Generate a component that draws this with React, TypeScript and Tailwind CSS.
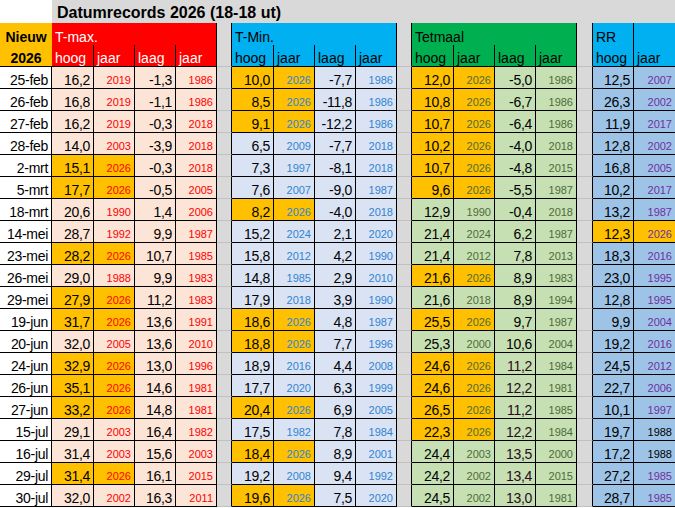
import React from 'react';

type Row = [string, string, string, string, string, string, string, string, string, string, string, string, string, string, string];

const rows: Row[] = [
  ['25-feb', '16,2', '2019', '-1,3', '1986', '10,0', '2026', '-7,7', '1986', '12,0', '2026', '-5,0', '1986', '12,5', '2007'],
  ['26-feb', '16,8', '2019', '-1,1', '1986', '8,5', '2026', '-11,8', '1986', '10,8', '2026', '-6,7', '1986', '26,3', '2002'],
  ['27-feb', '16,2', '2019', '-0,3', '2018', '9,1', '2026', '-12,2', '1986', '10,7', '2026', '-6,4', '1986', '11,9', '2017'],
  ['28-feb', '14,0', '2003', '-3,9', '2018', '6,5', '2009', '-7,7', '2018', '10,2', '2026', '-4,0', '2018', '12,8', '2002'],
  ['2-mrt', '15,1', '2026', '-0,3', '2018', '7,3', '1997', '-8,1', '2018', '10,7', '2026', '-4,8', '2015', '16,8', '2005'],
  ['5-mrt', '17,7', '2026', '-0,5', '2005', '7,6', '2007', '-9,0', '1987', '9,6', '2026', '-5,5', '1987', '10,2', '2017'],
  ['18-mrt', '20,6', '1990', '1,4', '2006', '8,2', '2026', '-4,0', '2018', '12,9', '1990', '-0,4', '2018', '13,2', '1987'],
  ['14-mei', '28,7', '1992', '9,9', '1987', '15,2', '2024', '2,1', '2020', '21,4', '2024', '6,2', '1987', '12,3', '2026'],
  ['23-mei', '28,2', '2026', '10,7', '1985', '15,8', '2012', '4,2', '1990', '21,4', '2012', '7,8', '2013', '18,3', '2016'],
  ['26-mei', '29,0', '1988', '9,9', '1983', '14,8', '1985', '2,9', '2010', '21,6', '2026', '8,9', '1983', '23,0', '1995'],
  ['29-mei', '27,9', '2026', '11,2', '1983', '17,9', '2018', '3,9', '1990', '21,6', '2018', '8,9', '1994', '12,8', '1995'],
  ['19-jun', '31,7', '2026', '13,6', '1991', '18,6', '2026', '4,8', '1987', '25,5', '2026', '9,7', '1987', '9,9', '2004'],
  ['20-jun', '32,0', '2005', '13,6', '2010', '18,8', '2026', '7,7', '1996', '25,3', '2000', '10,6', '2004', '19,2', '2016'],
  ['24-jun', '32,9', '2026', '13,0', '1996', '18,9', '2016', '4,4', '2008', '24,6', '2026', '11,2', '1984', '24,5', '2012'],
  ['26-jun', '35,1', '2026', '14,6', '1981', '17,7', '2020', '6,3', '1999', '24,6', '2026', '12,2', '1981', '22,7', '2006'],
  ['27-jun', '33,2', '2026', '14,8', '1981', '20,4', '2026', '6,9', '2005', '26,5', '2026', '11,2', '1985', '10,1', '1997'],
  ['15-jul', '29,1', '2003', '16,4', '1982', '17,5', '1982', '7,8', '1984', '22,3', '2026', '12,2', '1984', '19,7', '1988'],
  ['16-jul', '31,4', '2003', '15,6', '2003', '18,4', '2026', '8,9', '2001', '24,4', '2003', '13,5', '2000', '17,2', '1988'],
  ['29-jul', '31,4', '2026', '16,1', '2015', '19,2', '2008', '9,4', '1992', '24,2', '2002', '13,4', '2015', '27,2', '1985'],
  ['30-jul', '32,0', '2002', '16,3', '2011', '19,6', '2026', '7,5', '2020', '24,5', '2002', '13,0', '1981', '28,7', '1985'],
];

const AMBER = 'bg-[#ffc000]';

function Val({ v, bg, color = 'text-black', last = false }: { v: string; bg: string; color?: string; last?: boolean }) {
  return (
    <div className={`${bg} ${color} ${last ? '' : 'border-r'} border-b border-black h-[22px] flex items-end justify-end pr-[3px] text-[14px] leading-[16px] tracking-[-0.3px]`}>
      {v}
    </div>
  );
}

function Year({ v, bg, color, last = false }: { v: string; bg: string; color: string; last?: boolean }) {
  return (
    <div className={`${bg} ${color} ${last ? '' : 'border-r'} border-b border-black h-[22px] flex items-end justify-end pr-[3px] pb-[1px] text-[11px] leading-[14px]`}>
      {v}
    </div>
  );
}

function Spacer() {
  return <div className="bg-[#d9d9d9] h-[22px] border-r border-b border-r-black border-b-[#c0c0c0]" />;
}

function Sub({ label, bg, color, last = false }: { label: string; bg: string; color: string; last?: boolean }) {
  return (
    <div className={`${bg} ${color} ${last ? '' : 'border-r'} border-b border-black h-[22px] flex items-end pl-[3px] text-[14px] leading-[16px]`}>
      {label}
    </div>
  );
}

export default function App() {
  return (
    <div className="w-[675px] h-[508px] overflow-hidden bg-white font-['Liberation_Sans',Arial,sans-serif] text-black">
      <div className="grid grid-cols-[52px_42px_41px_41px_41px_15px_42px_41px_41px_41px_15px_42px_41px_41px_41px_16px_41px_41px]">
        {/* title row */}
        <div className="h-[23px] bg-white" />
        <div className="col-span-17 h-[23px] bg-[#d9d9d9] flex items-end pl-[5px] pb-[1px] font-bold text-[16px] leading-[18px]">
          Datumrecords 2026 (18-18 ut)
        </div>

        {/* header row 1 */}
        <div className="row-span-2 bg-[#ffc000] border-b border-black flex flex-col font-bold text-[14px] leading-[16px]">
          <div className="h-[22px] flex items-end justify-center">Nieuw</div>
          <div className="h-[21px] flex items-end justify-center">2026</div>
        </div>
        <div className="col-span-4 h-[22px] bg-[#ff0000] text-white border-r border-black flex items-end pl-[3px] text-[14px] leading-[16px]">T-max.</div>
        <div className="bg-[#d9d9d9] h-[22px] border-r border-black" />
        <div className="col-span-4 h-[22px] bg-[#00b0f0] border-r border-black flex items-end pl-[3px] text-[14px] leading-[16px]">T-Min.</div>
        <div className="bg-[#d9d9d9] h-[22px] border-r border-black" />
        <div className="col-span-4 h-[22px] bg-[#00b050] border-r border-black flex items-end pl-[3px] text-[14px] leading-[16px]">Tetmaal</div>
        <div className="bg-[#d9d9d9] h-[22px] border-r border-black" />
        <div className="h-[22px] bg-[#00b0f0] border-r border-black flex items-end pl-[3px] text-[14px] leading-[16px]">RR</div>
        <div className="h-[22px] bg-[#00b0f0]" />

        {/* header row 2 */}
        <Sub label="hoog" bg="bg-[#ff0000]" color="text-white" />
        <Sub label="jaar" bg="bg-[#ff0000]" color="text-white" />
        <Sub label="laag" bg="bg-[#ff0000]" color="text-white" />
        <Sub label="jaar" bg="bg-[#ff0000]" color="text-white" />
        <Spacer />
        <Sub label="hoog" bg="bg-[#00b0f0]" color="text-black" />
        <Sub label="jaar" bg="bg-[#00b0f0]" color="text-black" />
        <Sub label="laag" bg="bg-[#00b0f0]" color="text-black" />
        <Sub label="jaar" bg="bg-[#00b0f0]" color="text-black" />
        <Spacer />
        <Sub label="hoog" bg="bg-[#00b050]" color="text-black" />
        <Sub label="jaar" bg="bg-[#00b050]" color="text-black" />
        <Sub label="laag" bg="bg-[#00b050]" color="text-black" />
        <Sub label="jaar" bg="bg-[#00b050]" color="text-black" />
        <Spacer />
        <Sub label="hoog" bg="bg-[#00b0f0]" color="text-black" />
        <Sub label="jaar" bg="bg-[#00b0f0]" color="text-black" last />

        {/* data */}
        {rows.map((r, i) => {
          const tmaxBg = r[2] === '2026' ? AMBER : 'bg-[#fce4d6]';
          const tminBg = r[6] === '2026' ? AMBER : 'bg-[#dae3f3]';
          const tetBg = r[10] === '2026' ? AMBER : 'bg-[#c6e0b4]';
          const rrBg = r[14] === '2026' ? AMBER : 'bg-[#9dc3e6]';
          const rrYear = i === 16 || i === 17 ? 'text-black' : 'text-[#7030a0]';
          const tetLow = i >= 13 ? 'text-[#2a0a1a]' : 'text-black';
          return (
            <React.Fragment key={r[0]}>
              <Val v={r[0]} bg="bg-white" />
              <Val v={r[1]} bg={tmaxBg} />
              <Year v={r[2]} bg={tmaxBg} color="text-[#ff0000]" />
              <Val v={r[3]} bg="bg-[#fce4d6]" />
              <Year v={r[4]} bg="bg-[#fce4d6]" color="text-[#ff0000]" />
              <Spacer />
              <Val v={r[5]} bg={tminBg} />
              <Year v={r[6]} bg={tminBg} color="text-[#2f84d2]" />
              <Val v={r[7]} bg="bg-[#dae3f3]" />
              <Year v={r[8]} bg="bg-[#dae3f3]" color="text-[#2f84d2]" />
              <Spacer />
              <Val v={r[9]} bg={tetBg} />
              <Year v={r[10]} bg={tetBg} color="text-[#4f6b35]" />
              <Val v={r[11]} bg="bg-[#c6e0b4]" color={tetLow} />
              <Year v={r[12]} bg="bg-[#c6e0b4]" color="text-[#4f6b35]" />
              <Spacer />
              <Val v={r[13]} bg={rrBg} />
              <Year v={r[14]} bg={rrBg} color={rrYear} last />
            </React.Fragment>
          );
        })}
      </div>
    </div>
  );
}
